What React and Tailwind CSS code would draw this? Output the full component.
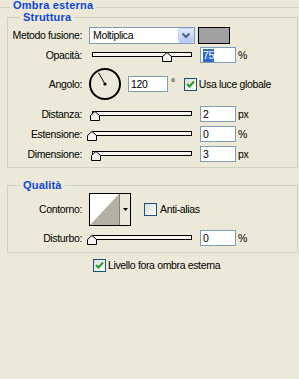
import React from "react";

const Label = ({ children }) => (
  <div className="w-[74px] shrink-0 text-right">{children}</div>
);

function Slider({ value }) {
  return (
    <div className="relative ml-[6px] w-[108px] h-[16px] shrink-0">
      <div className="absolute left-[4px] top-[5px] w-[100px] h-[5px] border border-black bg-[#F7F6EF]" />
      <svg
        className="absolute top-[5px]"
        style={{ left: 4 + value - 5 }}
        width="10"
        height="10"
        viewBox="0 0 10 10"
      >
        <polygon
          points="0.5,4.5 5,0.5 9.5,4.5 9.5,9.5 0.5,9.5"
          fill="#F4F3EE"
          stroke="#000"
          strokeWidth="1"
        />
      </svg>
    </div>
  );
}

const Input = ({ children, className }) => (
  <div
    className={
      "h-[16px] border border-[#7F9DB9] bg-white pl-[2px] flex items-center shrink-0 " +
      className
    }
  >
    {children}
  </div>
);

const Check = ({ checked }) => (
  <div className="w-[13px] h-[13px] shrink-0 border border-[#1C5180] bg-gradient-to-br from-[#DCDCD7] to-white flex items-center justify-center">
    {checked && (
      <svg width="9" height="9" viewBox="0 0 9 9">
        <polyline
          points="1,4 3.5,6.5 8,1.5"
          fill="none"
          stroke="#21A121"
          strokeWidth="2"
        />
      </svg>
    )}
  </div>
);

const Legend = ({ children }) => (
  <div className="-mt-[7px] ml-[12px] px-[3px] w-fit bg-[#ECE9D8] font-bold text-[11px] tracking-[0.2px] text-[#0B45DA]">
    {children}
  </div>
);

function SliderRow({ label, value, input, unit, className }) {
  return (
    <div className={"flex items-center h-[16px] " + className}>
      <Label>{label}</Label>
      <Slider value={value} />
      <Input className="ml-[4px] w-[36px]">{input}</Input>
      <span className="ml-[2px]">{unit}</span>
    </div>
  );
}

export default function App() {
  return (
    <div className="w-[299px] h-[379px] overflow-hidden bg-[#ECE9D8] text-black text-[10.5px] leading-[13px] tracking-[-0.35px] [font-family:'Liberation_Sans',Arial,sans-serif]">
      {/* Header */}
      <div className="flex items-start h-[17px]">
        <div className="mt-[7px] w-[10px] border-t border-[#D0D0BF]" />
        <div className="ml-[3px] -mt-[1px] font-bold text-[11px] tracking-[0.2px] text-[#0B45DA]">
          Ombra esterna
        </div>
        <div className="ml-[3px] mt-[7px] flex-1 border-t border-[#D0D0BF]" />
      </div>

      {/* Struttura */}
      <div className="ml-[7px] w-[291px] border border-[#D0D0BF] pb-[5px]">
        <Legend>Struttura</Legend>

        <div className="flex items-center h-[17px] mt-[3px]">
          <Label>Metodo fusione:</Label>
          <div className="ml-[7px] w-[106px] h-[17px] border border-[#7F9DB9] bg-white flex items-center shrink-0">
            <span className="pl-[3px] flex-1">Moltiplica</span>
            <div className="w-[16px] h-[15px] rounded-[2px] border border-[#C3D3FD] bg-gradient-to-b from-[#E2EBFE] to-[#B4C8F6] flex items-center justify-center">
              <svg width="10" height="7" viewBox="0 0 10 7">
                <polyline
                  points="1.5,1.5 5,5 8.5,1.5"
                  fill="none"
                  stroke="#4D6185"
                  strokeWidth="2"
                />
              </svg>
            </div>
          </div>
          <div className="ml-[3px] w-[32px] h-[17px] border border-black bg-[#A0A0A0] shrink-0" />
        </div>

        <div className="flex items-center h-[16px] mt-[3px]">
          <Label>Opacità:</Label>
          <Slider value={75} />
          <Input className="ml-[4px] w-[36px]">
            <span className="bg-[#316AC5] text-white">75</span>
          </Input>
          <span className="ml-[2px]">%</span>
        </div>

        <div className="flex items-center h-[34px] mt-[4px]">
          <Label>Angolo:</Label>
          <svg className="ml-[6px] shrink-0" width="34" height="34" viewBox="0 0 34 34">
            <circle cx="17" cy="17" r="15" fill="none" stroke="#000" strokeWidth="2" />
            <line x1="17" y1="17" x2="10.5" y2="5.7" stroke="#000" strokeWidth="1" />
            <circle cx="17" cy="17" r="1.6" fill="#000" />
          </svg>
          <Input className="ml-[6px] w-[40px]">120</Input>
          <span className="ml-[3px] self-start mt-[9px]">°</span>
          <div className="ml-[9px]">
            <Check checked />
          </div>
          <span className="ml-[2px]">Usa luce globale</span>
        </div>

        <SliderRow className="mt-[5px]" label="Distanza:" value={3} input="2" unit="px" />
        <SliderRow className="mt-[4px]" label="Estensione:" value={0} input="0" unit="%" />
        <SliderRow className="mt-[4px]" label="Dimensione:" value={4} input="3" unit="px" />
      </div>

      {/* Qualità */}
      <div className="ml-[7px] mt-[17px] w-[291px] border border-[#D0D0BF] pb-[6px]">
        <Legend>Qualità</Legend>

        <div className="flex items-center h-[33px] mt-[1px]">
          <Label>Contorno:</Label>
          <div className="ml-[7px] w-[42px] h-[33px] border border-black flex shrink-0 bg-[#ECE9D8]">
            <svg className="border-r border-[#808080]" width="30" height="31" viewBox="0 0 29 31" preserveAspectRatio="none">
              <polygon points="0,0 29,0 0,31" fill="#FFFFFF" />
              <polygon points="29,0 29,31 0,31" fill="#B4B0A4" />
            </svg>
            <div className="flex-1 flex items-center justify-center">
              <svg width="5" height="3" viewBox="0 0 5 3">
                <polygon points="0,0 5,0 2.5,3" fill="#000" />
              </svg>
            </div>
          </div>
          <div className="ml-[13px]">
            <Check />
          </div>
          <span className="ml-[3px]">Anti-alias</span>
        </div>

        <SliderRow className="mt-[4px]" label="Disturbo:" value={0} input="0" unit="%" />
      </div>

      <div className="flex items-center mt-[6px] ml-[93px]">
        <Check checked />
        <span className="ml-[2px]">Livello fora ombra esterna</span>
      </div>
    </div>
  );
}
